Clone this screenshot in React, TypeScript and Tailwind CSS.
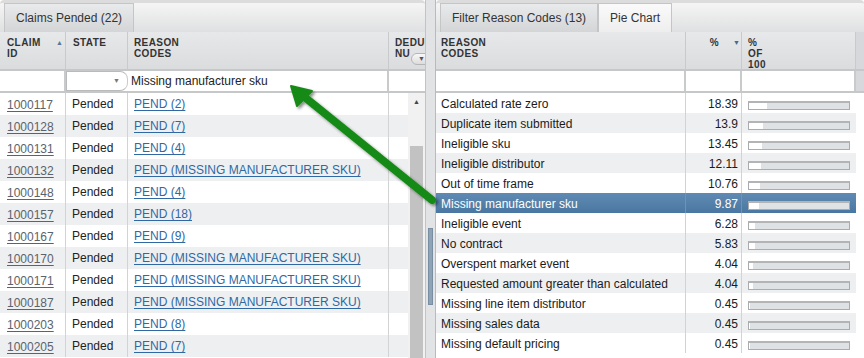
import React from 'react';

const claims: [string, string][] = [
  ['1000117', 'PEND (2)'],
  ['1000128', 'PEND (7)'],
  ['1000131', 'PEND (4)'],
  ['1000132', 'PEND (MISSING MANUFACTURER SKU)'],
  ['1000148', 'PEND (4)'],
  ['1000157', 'PEND (18)'],
  ['1000167', 'PEND (9)'],
  ['1000170', 'PEND (MISSING MANUFACTURER SKU)'],
  ['1000171', 'PEND (MISSING MANUFACTURER SKU)'],
  ['1000187', 'PEND (MISSING MANUFACTURER SKU)'],
  ['1000203', 'PEND (8)'],
  ['1000205', 'PEND (7)'],
];

const reasons: { name: string; pct: number; label: string }[] = [
  { name: 'Calculated rate zero', pct: 18.39, label: '18.39' },
  { name: 'Duplicate item submitted', pct: 13.9, label: '13.9' },
  { name: 'Ineligible sku', pct: 13.45, label: '13.45' },
  { name: 'Ineligible distributor', pct: 12.11, label: '12.11' },
  { name: 'Out of time frame', pct: 10.76, label: '10.76' },
  { name: 'Missing manufacturer sku', pct: 9.87, label: '9.87' },
  { name: 'Ineligible event', pct: 6.28, label: '6.28' },
  { name: 'No contract', pct: 5.83, label: '5.83' },
  { name: 'Overspent market event', pct: 4.04, label: '4.04' },
  { name: 'Requested amount greater than calculated', pct: 4.04, label: '4.04' },
  { name: 'Missing line item distributor', pct: 0.45, label: '0.45' },
  { name: 'Missing sales data', pct: 0.45, label: '0.45' },
  { name: 'Missing default pricing', pct: 0.45, label: '0.45' },
];

const headText = 'text-[10px] leading-[11px] font-bold tracking-[0.4px] text-[#333]';

const TabBar = ({ children }: { children: React.ReactNode }) => (
  <div className="h-[32px] flex items-end px-[4px] border-t-[3px] border-[#dcdcdc] bg-gradient-to-b from-[#f5f5f5] to-[#dfe0e1] rounded-t-[4px]">
    {children}
  </div>
);

const Tab = ({ label, active }: { label: string; active?: boolean }) => (
  <div
    className={`h-[29px] flex items-center px-[11px] text-[12px] text-[#333] border border-b-0 border-[#c4c5c7] ${
      active ? 'bg-gradient-to-b from-[#e9eaeb] to-[#d3d5d7]' : 'bg-gradient-to-b from-[#fafafa] to-[#eeeeee]'
    }`}
  >
    {label}
  </div>
);

const LeftPanel = () => (
  <div className="w-[426px] flex flex-col overflow-hidden border-r border-[#c2c3c5]">
    <TabBar>
      <Tab label="Claims Pended (22)" active />
    </TabBar>
    {/* header */}
    <div className="h-[39px] flex bg-gradient-to-b from-[#e7e8ea] to-[#dadcde] border-b-2 border-[#c6c7c9]">
      <div className="w-[66px] shrink-0 border-r border-[#c9cacc] pl-[7px] pt-[5px] flex">
        <div className={headText}>CLAIM<br />ID</div>
        <span className="ml-auto mr-[2px] mt-[1px] text-[7px] text-[#5a7796]">▲</span>
      </div>
      <div className={`w-[62px] shrink-0 border-r border-[#c9cacc] pl-[7px] pt-[5px] ${headText}`}>STATE</div>
      <div className={`w-[261px] shrink-0 border-r border-[#c9cacc] pl-[6px] pt-[5px] ${headText}`}>REASON<br />CODES</div>
      <div className="flex-1 pl-[6px] pt-[5px] relative overflow-hidden">
        <div className={`${headText} whitespace-nowrap`}>DEDUC<br />NU</div>
        <div className="absolute left-[22px] top-[21px] w-[20px] h-[12px] rounded-full border border-[#b5b6b8] bg-gradient-to-b from-[#f8f8f8] to-[#dcdcdc] flex items-center pl-[6px] text-[7px] text-[#555]">▼</div>
      </div>
    </div>
    {/* filter row */}
    <div className="h-[22px] flex bg-white border-b-2 border-[#c6c7c9]">
      <div className="w-[66px] shrink-0 border-r-2 border-[#c9cacc]" />
      <div className="w-[62px] shrink-0 border border-[#b9babc] border-r-[#c9cacc] rounded-r-[8px] flex items-center justify-end pr-[7px] text-[7px] text-[#777]">▼</div>
      <div className="w-[261px] shrink-0 border-r-2 border-[#c9cacc] pl-[3px] flex items-center text-[12px] text-[#222]">Missing manufacturer sku</div>
      <div className="flex-1" />
    </div>
    {/* body */}
    <div className="flex-1 flex">
      <div className="w-[408px] shrink-0">
        {claims.map(([id, code], i) => (
          <div key={id} className={`h-[22px] flex text-[12px] ${i % 2 ? 'bg-[#eeeff1]' : 'bg-white'}`}>
            <div className="w-[66px] shrink-0 border-r border-[#d2d3d5] pl-[7px] pt-[3px]">
              <span className="text-[#5a636c] underline decoration-[#3a6b9a] underline-offset-[2px]">{id}</span>
            </div>
            <div className="w-[62px] shrink-0 border-r border-[#d2d3d5] pl-[6px] pt-[2px] text-[#222]">Pended</div>
            <div className="w-[261px] shrink-0 border-r border-[#d2d3d5] pl-[6px] pt-[2px]">
              <span className="text-[#2f69a3] underline underline-offset-[2px]">{code}</span>
            </div>
            <div className="flex-1" />
          </div>
        ))}
      </div>
      <div className="w-[17px] shrink-0 bg-[#f1f1f1] flex flex-col items-center">
        <div className="h-[20px] pt-[4px] text-[7px] text-[#444]">▲</div>
        <div className="mt-[33px] w-[13px] flex-1 bg-[#c2c2c2]" />
      </div>
    </div>
  </div>
);

const Splitter = () => (
  <div className="w-[10px] shrink-0 bg-[#e2e3e5] border-r border-[#b9babc] flex flex-col">
    <div className="h-[228px]" />
    <div className="ml-[2px] w-[5px] h-[77px] bg-[#8fa3b6] border border-[#7a8ea2]" />
  </div>
);

const RightPanel = () => (
  <div className="flex-1 flex flex-col overflow-hidden">
    <TabBar>
      <Tab label="Filter Reason Codes (13)" active />
      <Tab label="Pie Chart" />
    </TabBar>
    <div className="h-[39px] flex bg-gradient-to-b from-[#e7e8ea] to-[#dadcde] border-b-2 border-[#c6c7c9]">
      <div className={`w-[250px] shrink-0 border-r border-[#c9cacc] pl-[5px] pt-[5px] ${headText}`}>REASON<br />CODES</div>
      <div className="w-[56px] shrink-0 border-r border-[#c9cacc] pt-[5px] flex justify-end pr-[1px]">
        <span className={headText}>%</span>
        <span className="ml-[14px] mt-[1px] text-[7px] text-[#46698d]">▼</span>
      </div>
      <div className={`w-[114px] shrink-0 border-r border-[#c9cacc] pl-[6px] pt-[5px] ${headText}`}>%<br />OF<br />100</div>
      <div className="flex-1 bg-[#d6d8db]" />
    </div>
    <div className="h-[22px] flex bg-white border-b-2 border-[#c6c7c9]">
      <div className="w-[250px] shrink-0 border-r-2 border-[#c9cacc]" />
      <div className="w-[56px] shrink-0 border-r-2 border-[#c9cacc]" />
      <div className="w-[114px] shrink-0 border-r-2 border-[#c9cacc]" />
      <div className="flex-1 bg-[#d6d8db]" />
    </div>
    <div className="flex-1">
      {reasons.map((r, i) => {
        const sel = r.name === 'Missing manufacturer sku';
        const bg = sel ? 'bg-gradient-to-b from-[#5f8ab3] to-[#4a77a1] text-white' : i % 2 ? 'bg-[#eeeff1] text-[#1b1b1b]' : 'bg-white text-[#1b1b1b]';
        return (
          <div key={r.name} className={`h-[20px] w-[420px] flex text-[12px] ${bg}`}>
            <div className={`w-[250px] shrink-0 border-r ${sel ? 'border-[#6e93b8]' : 'border-[#d2d3d5]'} pl-[5px] pt-[2px] whitespace-nowrap`}>{r.name}</div>
            <div className={`w-[56px] shrink-0 border-r ${sel ? 'border-[#6e93b8]' : 'border-[#d2d3d5]'} pr-[3px] pt-[2px] text-right`}>{r.label}</div>
            <div className="w-[114px] shrink-0 pl-[6px] pt-[8px]">
              <div className="w-[102px] h-[9px] border border-[#a9abad] border-t-2 border-t-[#b2b4b6] bg-[#dfe2e5]">
                <div className="h-full bg-white" style={{ width: `${r.pct}%` }} />
              </div>
            </div>
          </div>
        );
      })}
    </div>
  </div>
);

const Arrow = () => (
  <svg className="absolute inset-0 pointer-events-none" width="864" height="358">
    <defs>
      <filter id="sh" x="-20%" y="-20%" width="140%" height="140%">
        <feDropShadow dx="2" dy="2" stdDeviation="1.8" floodColor="#000" floodOpacity="0.45" />
      </filter>
    </defs>
    <g filter="url(#sh)" fill="#178a17" stroke="#178a17">
      <line x1="432" y1="200" x2="302" y2="95" strokeWidth="8" strokeLinecap="round" />
      <polygon points="291,86 312,91 297,106" strokeWidth="2" strokeLinejoin="round" />
    </g>
  </svg>
);

export default function App() {
  return (
    <div className="relative w-[864px] h-[358px] flex bg-white overflow-hidden font-['Liberation_Sans',Arial,sans-serif]">
      <LeftPanel />
      <Splitter />
      <RightPanel />
      <Arrow />
    </div>
  );
}
